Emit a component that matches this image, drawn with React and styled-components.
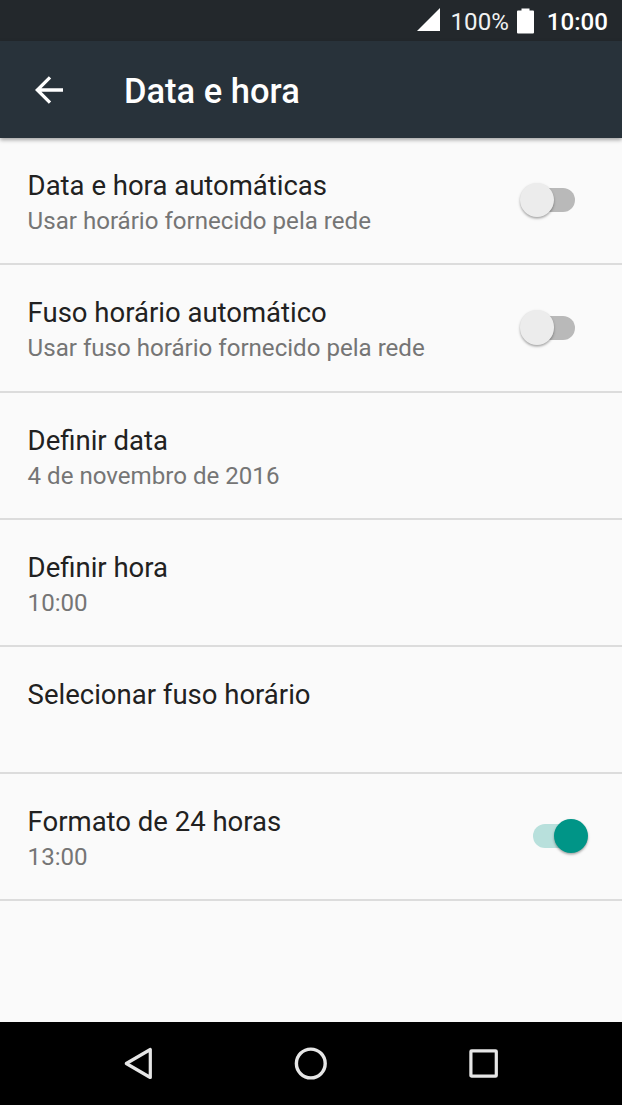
import React, { useState } from "react";
import styled, { createGlobalStyle } from "styled-components";

const App = () => {
  const [settings, setSettings] = useState({
    autoDate: false,
    autoZone: false,
    use24h: true,
  });

  const rows = [
    {
      title: "Data e hora automáticas",
      summary: "Usar horário fornecido pela rede",
      name: "autoDate",
    },
    {
      title: "Fuso horário automático",
      summary: "Usar fuso horário fornecido pela rede",
      name: "autoZone",
    },
    { title: "Definir data", summary: "4 de novembro de 2016" },
    { title: "Definir hora", summary: "10:00" },
    { title: "Selecionar fuso horário" },
    { title: "Formato de 24 horas", summary: "13:00", name: "use24h" },
  ];

  return (
    <Screen>
      <GlobalStyle />
      <StatusBar>
        <svg className="signal" width="23" height="23" viewBox="0 0 23 23">
          <path d="M23 0V23H0z" fill="#fff" />
        </svg>
        <span className="percent">100%</span>
        <svg className="battery" width="17" height="26" viewBox="0 0 17 26">
          <path
            d="M4.5 0.5H12.5V2.5H16Q17 2.5 17 3.5V24.5Q17 25.5 16 25.5H1Q0 25.5 0 24.5V3.5Q0 2.5 1 2.5H4.5z"
            fill="#fff"
          />
        </svg>
        <span className="clock">10:00</span>
      </StatusBar>
      <Toolbar>
        <button aria-label="Voltar">
          <svg width="28" height="28" viewBox="0 0 28 28">
            <path
              d="M28 14H2.5M15 1.3L2.3 14L15 26.7"
              fill="none"
              stroke="#fff"
              strokeWidth="3.3"
            />
          </svg>
        </button>
        <h1>Data e hora</h1>
      </Toolbar>
      <List>
        {rows.map(({ title, summary, name }) => (
          <Row key={title}>
            <div className="text">
              <h2>{title}</h2>
              {summary && <p>{summary}</p>}
            </div>
            {name && (
              <Switch
                role="switch"
                aria-label={title}
                aria-checked={settings[name]}
                $on={settings[name]}
                onClick={() =>
                  setSettings({ ...settings, [name]: !settings[name] })
                }
              />
            )}
          </Row>
        ))}
      </List>
      <NavBar>
        <svg width="32" height="36" viewBox="0 0 32 36">
          <path
            d="M28.3 3.5V31.5L4.3 17.5z"
            fill="none"
            stroke="#e6e6e6"
            strokeWidth="3.2"
            strokeLinejoin="round"
          />
        </svg>
        <svg width="36" height="36" viewBox="0 0 36 36">
          <circle
            cx="17.8"
            cy="17.5"
            r="14.4"
            fill="none"
            stroke="#e6e6e6"
            strokeWidth="3.4"
          />
        </svg>
        <svg width="32" height="36" viewBox="0 0 32 36">
          <rect
            x="2.9"
            y="4.8"
            width="25.4"
            height="25.4"
            rx="0.8"
            fill="none"
            stroke="#e6e6e6"
            strokeWidth="3.2"
          />
        </svg>
      </NavBar>
    </Screen>
  );
};

const GlobalStyle = createGlobalStyle`
  * {
    box-sizing: border-box;
  }
  body {
    margin: 0;
    font-family: Roboto, sans-serif;
  }
  h1, h2, p {
    margin: 0;
  }
  button {
    padding: 0;
    border: none;
    background: none;
    cursor: pointer;
  }
  svg {
    display: block;
  }
`;

const Screen = styled.div`
  display: flex;
  flex-direction: column;
  width: 100%;
  height: 100vh;
  min-height: 1105px;
  background-color: #fafafa;
`;

const StatusBar = styled.div`
  display: flex;
  align-items: center;
  justify-content: flex-end;
  height: 41px;
  padding-right: 14px;
  background-color: #23282c;
  color: #fff;
  font-size: 24.1px;
  line-height: 39px;
  .signal {
    margin-right: 11px;
    margin-bottom: 2px;
  }
  .percent {
    color: #f0f1f1;
    padding-top: 3px;
  }
  .battery {
    margin: 0 13px 0 8px;
  }
  .clock {
    padding-top: 3px;
    font-weight: 500;
  }
`;

const Toolbar = styled.header`
  display: flex;
  align-items: center;
  height: 97px;
  padding-left: 34.5px;
  background-color: #28323a;
  box-shadow: 0 2px 4px rgba(0, 0, 0, 0.35);
  color: #fff;
  h1 {
    margin-left: 61.5px;
    padding-top: 3px;
    font-size: 34.5px;
    font-weight: 500;
  }
`;

const List = styled.main`
  flex: 1;
  padding-top: 0.3px;
`;

const Row = styled.div`
  display: flex;
  align-items: center;
  justify-content: space-between;
  height: 127.2px;
  padding: 0 47px 0 27.6px;
  border-bottom: 2px solid #dcdcdc;
  .text {
    align-self: flex-start;
    padding-top: 30px;
  }
  h2 {
    color: #212121;
    font-size: 27.5px;
    font-weight: 400;
    line-height: 35px;
  }
  p {
    padding-top: 1px;
    color: #757575;
    font-size: 24.1px;
    line-height: 35px;
  }
`;

const Switch = styled.button`
  position: relative;
  width: 42px;
  height: 24px;
  margin-bottom: 1px;
  border-radius: 12px;
  background-color: ${({ $on }) => ($on ? "#b8e0dc" : "#b9b9b9")};
  &::after {
    content: "";
    position: absolute;
    top: -5.5px;
    left: ${({ $on }) => ($on ? "20.8px" : "-13.2px")};
    width: 34.6px;
    height: 34.6px;
    border-radius: 50%;
    background-color: ${({ $on }) => ($on ? "#009587" : "#ececec")};
    box-shadow: 0 1.5px 2.5px rgba(0, 0, 0, 0.35);
  }
`;

const NavBar = styled.nav`
  display: flex;
  align-items: center;
  justify-content: space-between;
  height: 83px;
  padding: 0 122px;
  background-color: #000;
`;

export default App;
